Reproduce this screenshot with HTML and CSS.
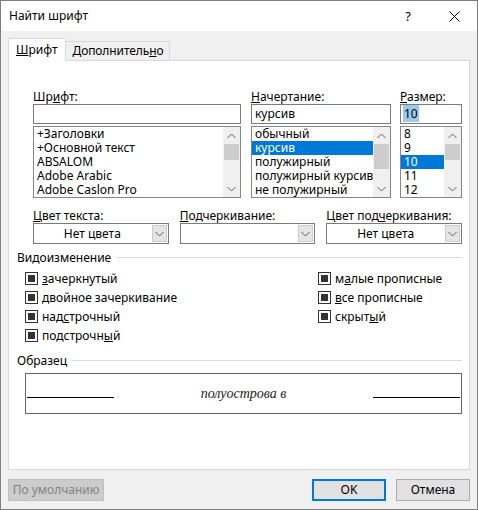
FILE: index.html
```html
<!DOCTYPE html>
<html>
<head>
<meta charset="utf-8">
<title>Найти шрифт</title>
<link rel="stylesheet" href="styles.css">
</head>
<body>
<div class="window">
  <div class="titlebar">
    <span class="title">Найти шрифт</span>
    <span class="capbtn">?</span>
    <span class="capbtn"><svg width="11" height="11" viewBox="0 0 11 11"><path d="M0.5 0.5 L10.5 10.5 M10.5 0.5 L0.5 10.5" stroke="#000" stroke-width="1" fill="none"/></svg></span>
  </div>
  <div class="client">
    <div class="tabs">
      <div class="tab active"><u>Ш</u>рифт</div>
      <div class="tab">Дополнитель<u>н</u>о</div>
    </div>
    <div class="panel">
      <div class="font-row">
        <div class="field f-name">
          <div class="label">Шр<u>и</u>фт:</div>
          <div class="edit"></div>
          <div class="listbox">
            <div class="items">
              <div class="item">+Заголовки</div>
              <div class="item">+Основной текст</div>
              <div class="item">ABSALOM</div>
              <div class="item">Adobe Arabic</div>
              <div class="item">Adobe Caslon Pro</div>
            </div>
            <div class="vscroll">
              <div class="arrow"><svg width="9" height="6" viewBox="0 0 9 6"><path d="M0.5 5 L4.5 1 L8.5 5" stroke="#606060" fill="none"/></svg></div>
              <div class="track"><div class="thumb thumb-small"></div></div>
              <div class="arrow"><svg width="9" height="6" viewBox="0 0 9 6"><path d="M0.5 1 L4.5 5 L8.5 1" stroke="#606060" fill="none"/></svg></div>
            </div>
          </div>
        </div>
        <div class="field f-style">
          <div class="label"><u>Н</u>ачертание:</div>
          <div class="edit">курсив</div>
          <div class="listbox">
            <div class="items">
              <div class="item">обычный</div>
              <div class="item selected">курсив</div>
              <div class="item">полужирный</div>
              <div class="item">полужирный курсив</div>
              <div class="item">не полужирный</div>
            </div>
            <div class="vscroll">
              <div class="arrow"><svg width="9" height="6" viewBox="0 0 9 6"><path d="M0.5 5 L4.5 1 L8.5 5" stroke="#606060" fill="none"/></svg></div>
              <div class="track"><div class="thumb thumb-big"></div></div>
              <div class="arrow"><svg width="9" height="6" viewBox="0 0 9 6"><path d="M0.5 1 L4.5 5 L8.5 1" stroke="#606060" fill="none"/></svg></div>
            </div>
          </div>
        </div>
        <div class="field f-size">
          <div class="label"><u>Р</u>азмер:</div>
          <div class="edit"><span class="sel-text">10</span></div>
          <div class="listbox">
            <div class="items">
              <div class="item">8</div>
              <div class="item">9</div>
              <div class="item selected">10</div>
              <div class="item">11</div>
              <div class="item">12</div>
            </div>
            <div class="vscroll">
              <div class="arrow"><svg width="9" height="6" viewBox="0 0 9 6"><path d="M0.5 5 L4.5 1 L8.5 5" stroke="#606060" fill="none"/></svg></div>
              <div class="track"><div class="thumb thumb-small"></div></div>
              <div class="arrow"><svg width="9" height="6" viewBox="0 0 9 6"><path d="M0.5 1 L4.5 5 L8.5 1" stroke="#606060" fill="none"/></svg></div>
            </div>
          </div>
        </div>
      </div>

      <div class="combo-row">
        <div class="field">
          <div class="label"><u>Ц</u>вет текста:</div>
          <div class="combo"><span class="combo-text">Нет цвета</span><span class="drop"><svg width="9" height="6" viewBox="0 0 9 6"><path d="M0.5 1 L4.5 5 L8.5 1" stroke="#606060" fill="none"/></svg></span></div>
        </div>
        <div class="field">
          <div class="label"><u>П</u>одчеркивание:</div>
          <div class="combo"><span class="combo-text"></span><span class="drop"><svg width="9" height="6" viewBox="0 0 9 6"><path d="M0.5 1 L4.5 5 L8.5 1" stroke="#606060" fill="none"/></svg></span></div>
        </div>
        <div class="field">
          <div class="label">Цвет под<u>ч</u>еркивания:</div>
          <div class="combo"><span class="combo-text">Нет цвета</span><span class="drop"><svg width="9" height="6" viewBox="0 0 9 6"><path d="M0.5 1 L4.5 5 L8.5 1" stroke="#606060" fill="none"/></svg></span></div>
        </div>
      </div>

      <div class="group-head group-effects"><span>Видоизменение</span><span class="rule"></span></div>
      <div class="effects">
        <div class="check"><span class="box"></span><span><u>з</u>ачеркнутый</span></div>
        <div class="check"><span class="box"></span><span>двойное зачеркивание</span></div>
        <div class="check"><span class="box"></span><span>над<u>с</u>трочный</span></div>
        <div class="check"><span class="box"></span><span>подстрочн<u>ы</u>й</span></div>
        <div class="check"><span class="box"></span><span>м<u>а</u>лые прописные</span></div>
        <div class="check"><span class="box"></span><span><u>в</u>се прописные</span></div>
        <div class="check"><span class="box"></span><span>скрыт<u>ы</u>й</span></div>
      </div>

      <div class="group-head group-sample"><span>Образец</span><span class="rule"></span></div>
      <div class="preview">
        <span class="pline"></span>
        <span class="ptext">полуострова в</span>
        <span class="pline"></span>
      </div>
    </div>

    <div class="buttons">
      <div class="btn disabled">По умолчанию</div>
      <div class="spacer"></div>
      <div class="btn default">OK</div>
      <div class="btn">Отмена</div>
    </div>
  </div>
</div>
</body>
</html>
```

FILE: styles.css
```css
body {
	margin: 0;
	font-family: "Noto Sans", "Open Sans", sans-serif;
	font-size: 12px;
	color: #000000;
}

u { text-underline-offset: 1px; }

.window {
	width: 478px;
	height: 510px;
	box-sizing: border-box;
	border: 1px solid #7f7f7f;
	background: #f0f0f0;
	display: flex;
	flex-direction: column;
}

.titlebar {
	height: 30px;
	background: #ffffff;
	display: flex;
	align-items: center;
	padding-left: 8px;
}
.title { flex: 1; line-height: 16px; }
.capbtn {
	width: 46px;
	height: 30px;
	display: flex;
	align-items: center;
	justify-content: center;
	font-size: 13px;
}

.client {
	flex: 1;
	padding: 0 7px;
	display: flex;
	flex-direction: column;
}

/* tabs */
.tabs {
	margin-top: 7px;
	margin-bottom: -1px;
	display: flex;
	align-items: flex-end;
}
.tab {
	box-sizing: border-box;
	height: 19px;
	margin-bottom: 1px;
	padding: 0 5px 0 6px;
	line-height: 18px;
	border: 1px solid #d9d9d9;
	border-bottom: none;
	background: #f0f0f0;
	letter-spacing: -0.1px;
}
.tab.active {
	height: 23px;
	margin-bottom: 0;
	padding: 0 8px 0 7px;
	line-height: 22px;
	background: #ffffff;
	position: relative;
	z-index: 1;
	border-right: none;
	letter-spacing: 0;
}

.panel {
	box-sizing: border-box;
	height: 410px;
	background: #ffffff;
	border: 1px solid #d9d9d9;
	padding: 28px 7px 0 8px;
}

.label { height: 15px; line-height: 15px; white-space: nowrap; }

/* font / style / size */
.font-row {
	margin-left: 16px;
	display: flex;
}
.f-name { width: 208px; margin-right: 10px; }
.f-style { width: 140px; margin-right: 9px; }
.f-size { width: 62px; }

.edit {
	box-sizing: border-box;
	height: 20px;
	border: 1px solid #7a7a7a;
	padding: 0 3px;
	line-height: 18px;
	white-space: nowrap;
}
.sel-text { background: #99c9ef; padding: 0 1px; margin-left: -1px; }

.listbox {
	box-sizing: border-box;
	height: 72px;
	margin-top: 2px;
	border: 1px solid #828790;
	display: flex;
}
.items { flex: 1; }
.item {
	height: 14px;
	line-height: 14px;
	padding-left: 3px;
	white-space: nowrap;
}
.item.selected { background: #0078d7; color: #ffffff; }

.vscroll {
	width: 17px;
	background: #f0f0f0;
	display: flex;
	flex-direction: column;
}
.arrow {
	height: 17px;
	display: flex;
	align-items: center;
	justify-content: center;
}
.track { flex: 1; }
.thumb { margin: 0 1px; background: #cdcdcd; }
.thumb-small { height: 16px; }
.thumb-big { height: 25px; }

/* colour / underline combos */
.combo-row {
	margin: 10px 0 0 16px;
	display: grid;
	grid-template-columns: 1fr 1fr 1fr;
	column-gap: 11px;
}
.combo {
	box-sizing: border-box;
	height: 21px;
	border: 1px solid #7a7a7a;
	display: flex;
	background: #ffffff;
}
.combo-text {
	flex: 1;
	text-align: center;
	line-height: 19px;
}
.drop {
	box-sizing: border-box;
	width: 15px;
	margin: 1px;
	background: #e5e5e5;
	border: 1px solid #cccccc;
	display: flex;
	align-items: center;
	justify-content: center;
}

/* groups */
.group-head {
	display: flex;
	align-items: center;
	line-height: 15px;
	height: 15px;
}
.group-head .rule {
	flex: 1;
	height: 1px;
	margin-left: 5px;
	background: #dcdcdc;
}
.group-effects { margin-top: 6px; }
.group-sample { margin-top: 8px; }

.effects {
	margin: 4px 0 0 8px;
	display: grid;
	grid-template-columns: 293px 1fr;
	grid-template-rows: repeat(4, 19px);
	grid-auto-flow: column;
}
.check {
	display: flex;
	align-items: center;
	white-space: nowrap;
}
.box {
	box-sizing: border-box;
	width: 13px;
	height: 13px;
	margin-right: 4px;
	border: 1px solid #333333;
	padding: 2px;
	background: #ffffff;
}
.box::after {
	content: "";
	display: block;
	width: 7px;
	height: 7px;
	background: #333333;
}

.preview {
	box-sizing: border-box;
	height: 41px;
	margin: 5px 0 0 8px;
	border: 1px solid #646464;
	padding: 12px 1px 0 1px;
	display: flex;
	align-items: baseline;
	justify-content: space-between;
}
.pline {
	width: 87px;
	height: 1px;
	background: #000000;
}
.ptext {
	font-family: "Liberation Serif", serif;
	font-style: italic;
	font-size: 14px;
	line-height: 16px;
	color: #222222;
}

/* bottom buttons */
.buttons {
	margin-top: 9px;
	display: flex;
}
.spacer { flex: 1; }
.btn {
	box-sizing: border-box;
	width: 74px;
	height: 22px;
	margin-left: 10px;
	border: 1px solid #adadad;
	background: #e1e1e1;
	text-align: center;
	line-height: 20px;
}
.btn.default { border: 2px solid #0078d7; line-height: 18px; }
.btn.disabled {
	width: 96px;
	margin-left: 0;
	background: #cccccc;
	border-color: #bfbfbf;
	color: #838383;
}
```
